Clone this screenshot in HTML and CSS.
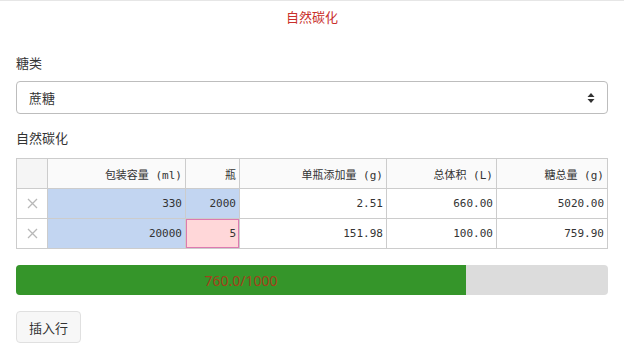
FILE: index.html
```html
<!DOCTYPE html>
<html lang="zh">
<head>
    <meta charset="UTF-8">
    <title>自然碳化</title>
    <link rel="stylesheet" href="styles.css">
</head>
<body>
    <div class="page">
        <h1 class="title">自然碳化</h1>

        <label class="field-label" for="sugar">糖类</label>
        <div class="select-wrap">
            <select id="sugar" class="select">
                <option>蔗糖</option>
            </select>
            <svg class="select-arrow" width="8" height="12" viewBox="0 0 8 12">
                <path d="M4 1 L7.5 5 L0.5 5 Z M4 11 L7.5 7 L0.5 7 Z" fill="#333"/>
            </svg>
        </div>

        <div class="field-label section">自然碳化</div>
        <table class="grid">
            <colgroup>
                <col style="width:31px">
                <col style="width:138px">
                <col style="width:54px">
                <col style="width:147px">
                <col style="width:110px">
                <col>
            </colgroup>
            <thead>
                <tr>
                    <th class="corner"></th>
                    <th>包装容量 (ml)</th>
                    <th>瓶</th>
                    <th>单瓶添加量 (g)</th>
                    <th>总体积 (L)</th>
                    <th>糖总量 (g)</th>
                </tr>
            </thead>
            <tbody>
                <tr>
                    <td class="del">
                        <svg width="11" height="11" viewBox="0 0 11 11"><path d="M1 1 L10 10 M10 1 L1 10" stroke="#b8b8b8" stroke-width="1.3"/></svg>
                    </td>
                    <td class="sel">330</td>
                    <td class="sel">2000</td>
                    <td>2.51</td>
                    <td>660.00</td>
                    <td>5020.00</td>
                </tr>
                <tr>
                    <td class="del">
                        <svg width="11" height="11" viewBox="0 0 11 11"><path d="M1 1 L10 10 M10 1 L1 10" stroke="#b8b8b8" stroke-width="1.3"/></svg>
                    </td>
                    <td class="sel">20000</td>
                    <td class="bad">5</td>
                    <td>151.98</td>
                    <td>100.00</td>
                    <td>759.90</td>
                </tr>
            </tbody>
        </table>

        <div class="progress">
            <div class="progress-bar" style="width:76%">760.0/1000</div>
        </div>

        <button class="btn" type="button">插入行</button>
    </div>
</body>
</html>
```

FILE: styles.css
```css
body {
    margin: 0;
    padding: 0;
    border-top: 1px solid #e6e6e6;
    font-family: "Noto Sans", "Noto Sans CJK SC", sans-serif;
    color: #333333;
    background: #ffffff;
}

.page {
    padding: 0 16px;
}

.title {
    margin: 0;
    font-size: 13px;
    font-weight: 400;
    line-height: 33px;
    text-align: center;
    color: #c9302c;
}

.field-label {
    display: block;
    margin-top: 19px;
    font-size: 13px;
    line-height: 20px;
}

.field-label.section {
    margin-top: 14px;
}

.select-wrap {
    position: relative;
    margin-top: 8px;
}

.select {
    display: block;
    width: 100%;
    height: 33px;
    padding: 0 12px;
    border: 1px solid #bdbdbd;
    border-radius: 4px;
    background: #ffffff;
    font-family: inherit;
    font-size: 13px;
    color: #333333;
    appearance: none;
    -webkit-appearance: none;
}

.select-arrow {
    position: absolute;
    right: 13px;
    top: 11px;
}

.grid {
    width: 100%;
    margin-top: 10px;
    border-collapse: collapse;
    table-layout: fixed;
    font-family: "DejaVu Sans Mono", "Noto Sans CJK SC", monospace;
    font-size: 11px;
    color: #333333;
}

.grid th,
.grid td {
    height: 29px;
    padding: 0 3px 0 4px;
    border: 1px solid #cccccc;
    text-align: right;
    white-space: nowrap;
    overflow: hidden;
}

.grid th {
    font-weight: 400;
    background: #fafafa;
}

.grid th.corner {
    background: #f5f5f5;
}

.grid td.del {
    padding: 0;
    text-align: center;
    line-height: 0;
}

.grid td.sel {
    background: #c2d5f1;
}

.grid td.bad {
    background: #ffd7d9;
    box-shadow: inset 0 0 0 1px #dd7ab0;
}

.progress {
    display: flex;
    height: 30px;
    margin-top: 16px;
    border-radius: 4px;
    overflow: hidden;
    background: #dcdcdc;
}

.progress-bar {
    display: flex;
    align-items: center;
    justify-content: center;
    background: #35952a;
    color: #a4401c;
    font-size: 14px;
}

.btn {
    display: block;
    margin-top: 16px;
    height: 32px;
    padding: 0 12px;
    border: 1px solid #e0e0e0;
    border-radius: 4px;
    background: #f7f7f7;
    font-family: inherit;
    font-size: 13px;
    color: #333333;
}
```
